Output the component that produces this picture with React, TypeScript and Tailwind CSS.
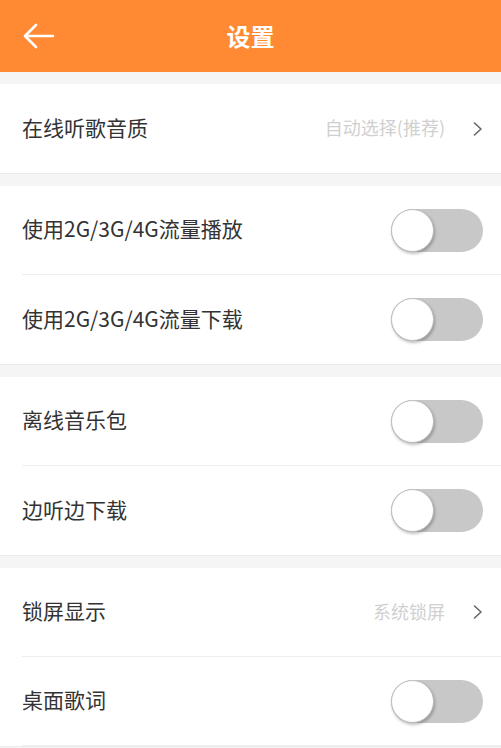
import React from 'react';

const font = { fontFamily: '"Noto Sans CJK SC", "Noto Sans", sans-serif' };

const Chevron = () => (
  <svg width="10" height="14" viewBox="0 0 10 14" fill="none" className="ml-[28px]">
    <path d="M1.5 1L8 7L1.5 13" stroke="#666" strokeWidth="1.6" strokeLinecap="round" strokeLinejoin="round" />
  </svg>
);

const Toggle = () => (
  <div className="relative w-[92px] h-[43px] rounded-full bg-[#c8c8c8]">
    <div className="absolute left-0 top-0 w-[43px] h-[43px] rounded-full bg-white border border-[#bdbdbd] shadow-[1px_2px_3px_rgba(0,0,0,0.25)]" />
  </div>
);

type Row = { label: string; value?: string; toggle?: boolean };

const SettingRow = ({ row, last }: { row: Row; last: boolean }) => (
  <div className="pl-[22px] bg-white">
    <div className={`h-[89px] flex items-center pr-[18px] ${last ? '' : 'border-b border-[#eeeeee]'}`}>
      <span className="text-[21px] text-[#333333] flex-1 -mt-[2px]">{row.label}</span>
      {row.toggle ? (
        <Toggle />
      ) : (
        <div className="flex items-center">
          <span className="text-[18px] text-[#d0d0d0] -mt-[2px]">{row.value}</span>
          <Chevron />
        </div>
      )}
    </div>
  </div>
);

const sections: Row[][] = [
  [{ label: '在线听歌音质', value: '自动选择(推荐)' }],
  [
    { label: '使用2G/3G/4G流量播放', toggle: true },
    { label: '使用2G/3G/4G流量下载', toggle: true },
  ],
  [
    { label: '离线音乐包', toggle: true },
    { label: '边听边下载', toggle: true },
  ],
  [
    { label: '锁屏显示', value: '系统锁屏' },
    { label: '桌面歌词', toggle: true },
  ],
];

const App = () => {
  return (
    <div className="w-[501px] h-[748px] overflow-hidden bg-[#f6f5f6]" style={font}>
      <header className="relative h-[72px] bg-[#ff8a33] flex items-center justify-center">
        <svg width="32" height="26" viewBox="0 0 32 26" fill="none" className="absolute left-[23px] top-[23px]">
          <path d="M30 13H3M13 2L2 13L13 24" stroke="white" strokeWidth="2.6" strokeLinecap="round" strokeLinejoin="round" />
        </svg>
        <h1 className="text-[24px] font-bold text-white">设置</h1>
      </header>
      <div className="pt-[12px] flex flex-col gap-[12px]">
        {sections.map((sec, i) => (
          <section key={i} className="bg-white border-b border-[#ebebeb]">
            {sec.map((row, j) => (
              <SettingRow key={row.label} row={row} last={j === sec.length - 1 && i !== sections.length - 1} />
            ))}
          </section>
        ))}
      </div>
    </div>
  );
};

export default App;
